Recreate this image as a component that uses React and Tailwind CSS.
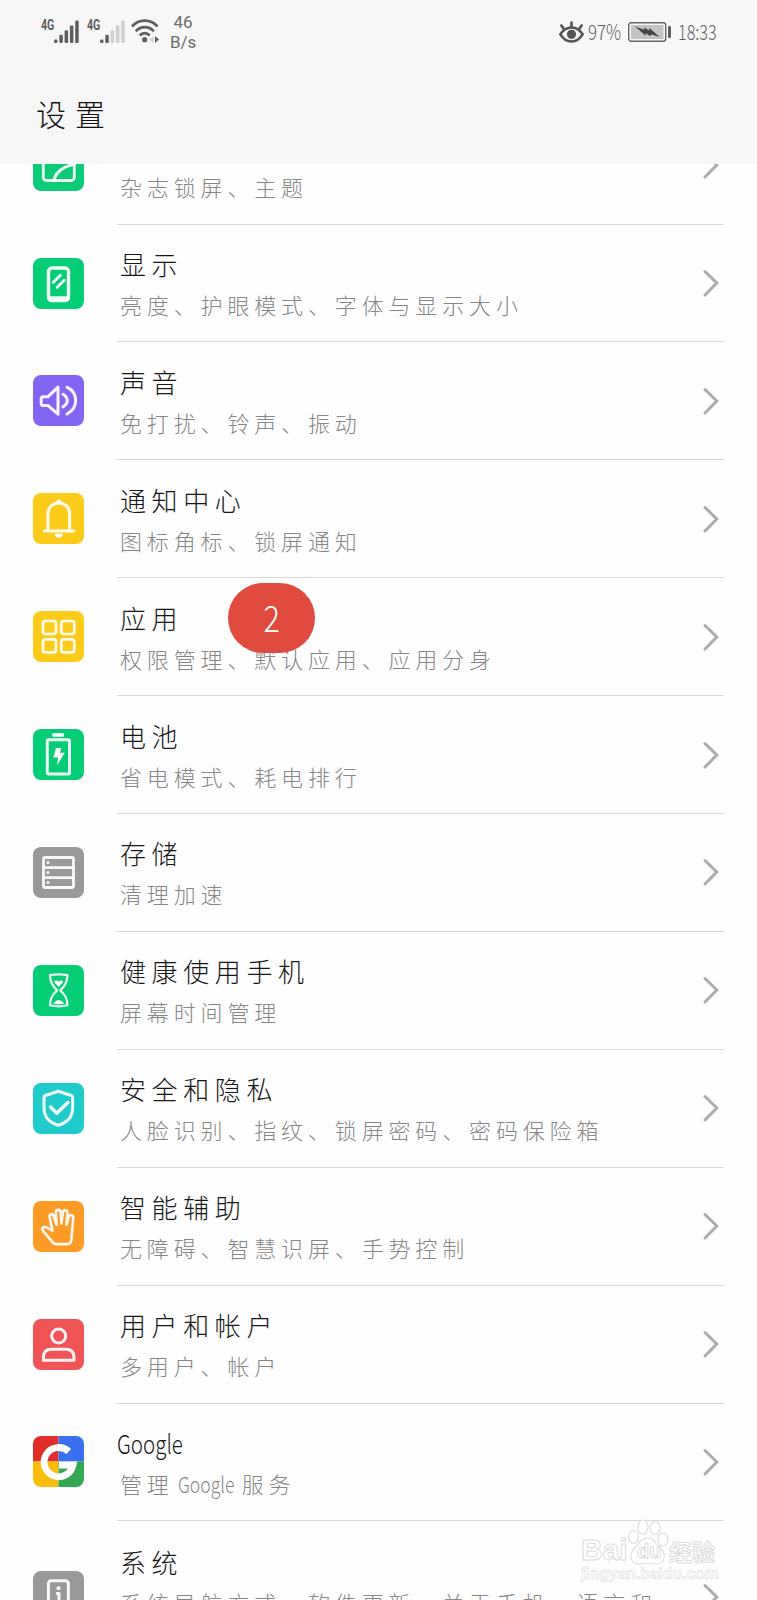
import React from 'react'

function Tile({ bg, children }) {
  return (
    <svg
      viewBox="0 0 51 51"
      className={`mb-px size-[51px] shrink-0 rounded-lg ${bg}`}
      fill="none"
      stroke="#fff"
      strokeOpacity="0.92"
      strokeWidth="3"
      strokeLinecap="round"
      strokeLinejoin="round"
    >
      {children}
    </svg>
  )
}

const icons = {
  wallpaper: (
    <Tile bg="bg-[#0bcb77]">
      <rect x="10.3" y="9" width="31" height="31.5" rx="3" strokeWidth="2.8" />
      <path d="M21 40c2-8 10-14 20-15.5" />
    </Tile>
  ),
  display: (
    <Tile bg="bg-[#05cd76]">
      <rect x="15.5" y="10" width="20" height="32.5" rx="3.5" strokeWidth="3.4" />
      <path d="M17 40.8h17" strokeWidth="5" />
      <path d="M20.3 24.3l7-7M24.2 29.3l7-7" strokeWidth="3" />
    </Tile>
  ),
  sound: (
    <Tile bg="bg-[#8465f3]">
      <path d="M8.2 23.8q0-2 2-2h4.6l10.2-9.6v27L14.8 30.4h-4.6q-2 0-2-2z" />
      <path d="M30 19.3c5.6 3.4 5.6 9.2 0 12.6M34 12.2c11.6 6 11.6 20.8 0 26.8" />
    </Tile>
  ),
  bell: (
    <Tile bg="bg-[#fdcc1b]">
      <path d="M11.3 37.9h29.4M15 37.5V20.3c0-6 4.8-10.4 10.8-10.4s10.8 4.4 10.8 10.4v17.2" />
      <circle cx="25.8" cy="8.8" r="2.2" fill="#fff" stroke="none" />
      <path d="M21.8 40.8h8a4 3.8 0 0 1-8 0z" fill="#fff" stroke="none" />
    </Tile>
  ),
  apps: (
    <Tile bg="bg-[#fdcc1b]">
      <rect x="10" y="10" width="13" height="13" rx="2.4" strokeWidth="2.7" />
      <rect x="28.3" y="10" width="13" height="13" rx="2.4" strokeWidth="2.7" />
      <rect x="10" y="28.3" width="13" height="13" rx="2.4" strokeWidth="2.7" />
      <rect x="28.3" y="28.3" width="13" height="13" rx="2.4" strokeWidth="2.7" />
    </Tile>
  ),
  battery: (
    <Tile bg="bg-[#05cd76]">
      <rect x="19.3" y="4.2" width="11.6" height="3.6" rx="1" fill="#fff" stroke="none" />
      <rect x="14.3" y="10.8" width="22.2" height="34.2" rx="1.5" />
      <path d="M23 19h5.2l-1.3 4.8h4.8L24 36.3l1.2-7.8h-4.9z" fill="#fff" stroke="none" />
    </Tile>
  ),
  storage: (
    <Tile bg="bg-[#999999]">
      <rect x="10.5" y="10.5" width="30" height="30" rx="1.5" strokeWidth="2.8" />
      <path d="M10.5 20.6h30M10.5 30.6h30" strokeWidth="2.8" />
      <circle cx="15" cy="15.4" r="1.5" fill="#fff" stroke="none" />
      <circle cx="15" cy="25.6" r="1.5" fill="#fff" stroke="none" />
      <circle cx="15" cy="35.6" r="1.5" fill="#fff" stroke="none" />
    </Tile>
  ),
  hourglass: (
    <Tile bg="bg-[#05cd76]">
      <path
        d="M17 10.2q8.7-1.8 17.4 0c0 6.5-1.7 10.3-7.2 15.1c5.5 4.8 7.2 8.5 7.2 15q-8.700 2-17.400 0c0-6.5 1.7-10.2 7.2-15c-5.5-4.8-7.2-8.6-7.2-15.1z"
        strokeWidth="2.2"
      />
      <path d="M25.7 22l-4-4.3q-1-2.2 1.3-2.2q1.8 0 2.7 1.2q.9-1.2 2.700-1.2q2.3 0 1.3 2.2z" fill="#fff" stroke="none" />
      <path d="M20 38.5q5.7-7.2 11.4 0q-5.7 1.4-11.4 0z" fill="#fff" stroke="none" />
    </Tile>
  ),
  shield: (
    <Tile bg="bg-[#20cccb]">
      <path d="M25.3 8.300l13 4.2q1.3.5 1.3 2V25c0 8.5-5.2 14.5-14.3 17.3C16.2 39.5 11 33.5 11 25V14.5q0-1.5 1.3-2z" />
      <path d="M17.5 24l6.2 6.2L35 19.5" strokeWidth="3.4" />
    </Tile>
  ),
  hand: (
    <Tile bg="bg-[#fe9a26]">
      <path
        d="M19.5 29.500L16.700 16.500c-.8-3.800 2.800-4.500 3.900-1.600l3 8.800L22.800 11.500c0-3.500 4.400-3.500 4.800-.4l.8 11.400 1.400-11c.5-3 4.700-2.700 4.600.5l-.8 11.600 2.100-7.600c.9-3 5-2 4.500 1l-1.800 21.500q-.4 4.600-4.200 4.600h-10.400q-2.200 0-4-1.700L10.600 30.600c-2.700-2.800-.3-5.900 3-4.200l5.900 3.200z"
        strokeWidth="2.700"
      />
    </Tile>
  ),
  user: (
    <Tile bg="bg-[#f05456]">
      <circle cx="25.7" cy="17" r="7" />
      <path d="M18.500 30.3h14.4q8.100 0 8.100 8v3H10.400v-3q0-8 8.100-8z" />
    </Tile>
  ),
  google: (
    <svg viewBox="0 0 51 51" className="mb-px size-[51px] shrink-0 rounded-lg" fill="none">
      <path d="M0 0h25.5v25.5H0z" fill="#e02f2b" />
      <path d="M25.5 0H51v25.5H25.5z" fill="#3a70f0" />
      <path d="M0 25.5h25.5V51H0z" fill="#fbbe0c" />
      <path d="M25.5 25.5H51V51H25.5z" fill="#34a753" />
      <path d="M35.7 15.5A14.600 14.600 0 1 0 40 29H26" stroke="#fff" strokeWidth="6.8" />
    </svg>
  ),
  system: (
    <Tile bg="bg-[#999999]">
      <rect x="15.4" y="9.8" width="20" height="32" rx="3" />
      <path d="M23 22.5h3v11M22.8 33.5h5.6" strokeLinecap="butt" />
      <circle cx="25.5" cy="17.3" r="2" fill="#fff" stroke="none" />
    </Tile>
  ),
}

const rows = [
  { icon: 'wallpaper', desc: '杂志锁屏、主题' },
  { icon: 'display', title: '显示', desc: '亮度、护眼模式、字体与显示大小' },
  { icon: 'sound', title: '声音', desc: '免打扰、铃声、振动' },
  { icon: 'bell', title: '通知中心', desc: '图标角标、锁屏通知' },
  { icon: 'apps', title: '应用', desc: '权限管理、默认应用、应用分身', badge: '2' },
  { icon: 'battery', title: '电池', desc: '省电模式、耗电排行' },
  { icon: 'storage', title: '存储', desc: '清理加速' },
  { icon: 'hourglass', title: '健康使用手机', desc: '屏幕时间管理' },
  { icon: 'shield', title: '安全和隐私', desc: '人脸识别、指纹、锁屏密码、密码保险箱' },
  { icon: 'hand', title: '智能辅助', desc: '无障碍、智慧识屏、手势控制' },
  { icon: 'user', title: '用户和帐户', desc: '多用户、帐户' },
  {
    icon: 'google',
    title: <Latin box="-ml-[3px] w-[64px]" scale="scale-x-[0.79]">Google</Latin>,
    desc: (
      <>
        管理<Latin box="ml-[4px] w-[64px]" scale="scale-x-[0.8]">Google</Latin>服务
      </>
    ),
  },
]

// Narrow latin text: the glyphs are squeezed inside a box of fixed width
function Latin({ box, scale, children }) {
  return (
    <span className={`inline-block whitespace-nowrap tracking-normal ${box}`}>
      <span className={`inline-block origin-left ${scale}`}>{children}</span>
    </span>
  )
}

function Chevron() {
  return (
    <svg
      viewBox="0 0 18 30"
      className="mr-[4px] h-[30px] w-[18px] shrink-0"
      fill="none"
      stroke="#acacac"
      strokeWidth="3"
      strokeLinecap="round"
    >
      <path d="M3 3.5L14.8 15L3 27" />
    </svg>
  )
}

function Row({ icon, title, desc, badge }) {
  return (
    <li className="flex h-[117.9px] items-center pl-[33px]">
      {icons[icon]}
      <div className="relative ml-[33px] mr-[33px] flex h-full flex-1 items-center border-b border-[#d9d9d9]">
        <div className="flex-1 pl-[3px] pt-[2px]">
          <div className="h-10 text-[26px] leading-10 tracking-[5.6px] text-[#161616]">{title}</div>
          <div className="h-10 whitespace-nowrap text-[22px] leading-10 tracking-[4.85px] text-[#868686]">{desc}</div>
        </div>
        <Chevron />
        {badge && (
          <span className="absolute left-[111px] top-[5px] flex h-[70px] w-[87px] items-center justify-center rounded-[35px] bg-[#e04a3f] pb-[4px] text-[36px] text-white">
            <span className="scale-x-[0.85]">{badge}</span>
          </span>
        )}
      </div>
    </li>
  )
}

function Signal({ on }) {
  const bars = [
    [0, 19.5, 3.5],
    [5.3, 14.8, 8.2],
    [10.6, 10.2, 12.8],
    [15.9, 5.5, 17.5],
    [21.2, 0.5, 22.5],
  ]
  return (
    <svg viewBox="0 0 25 24" className="mt-[20px] h-6 w-[25px]">
      {bars.map(([x, y, h], i) => (
        <rect key={x} x={x} y={y} width="3.5" height={h} rx="1.2" fill={i < on ? '#5e5e5e' : '#cfcfcf'} />
      ))}
    </svg>
  )
}

function StatusBar() {
  return (
    <div className="flex h-16 items-start pl-[41px] pr-[39px] text-[#5e5e5e]">
      <span className="mt-[18px] w-[13px] font-['Roboto'] text-[14px] font-bold leading-[14px]">
        <span className="inline-block origin-left scale-x-[0.76]">4G</span>
      </span>
      <Signal on={5} />
      <span className="ml-[8px] mt-[18px] w-[13px] font-['Roboto'] text-[14px] font-bold leading-[14px]">
        <span className="inline-block origin-left scale-x-[0.76]">4G</span>
      </span>
      <Signal on={2} />
      <svg viewBox="0 0 28 24" className="ml-[6px] mt-[19px] h-6 w-7" fill="none" stroke="#5e5e5e" strokeWidth="2.8">
        <path d="M1 7.5C8-.3 19.5-.3 26.5 7.5M4.8 12.200c5-5.400 13-5.400 18 0M8.7 16.5c3-3 7-3 10 0" />
        <circle cx="13.7" cy="20.7" r="2.6" fill="#5e5e5e" stroke="none" />
        <path d="M22.5 17v7l-4.200-3.500z" fill="#cfcfcf" stroke="none" />
        <path d="M24 17v7l4-3.500z" fill="#5e5e5e" stroke="none" />
      </svg>
      <div className="ml-[11px] mt-[12px] w-[26px] text-center font-['Roboto'] text-[17px] font-normal leading-5 text-[#6c6c6c]">
        <div>46</div>
        <div>B/s</div>
      </div>

      <svg viewBox="0 0 25 23" className="ml-auto mt-[21px] h-[23px] w-[25px]" fill="none" stroke="#555" strokeWidth="2.6" strokeLinecap="round">
        <path d="M1.4 13.3C7 4.300 18 4.300 23.600 13.3C18 22.800 7 22.800 1.400 13.3z" />
        <path d="M12.5 1.5v4M2.3 4.5l2 2.6M22.700 4.5l-2 2.6" />
        <circle cx="12.5" cy="13.3" r="4.6" fill="#555" stroke="none" />
      </svg>
      <span className="ml-[4px] mt-[19px] w-[34px] text-[21px] leading-6">
        <span className="inline-block origin-left scale-x-[0.8]">97%</span>
      </span>
      <svg viewBox="0 0 44 20" className="ml-[6px] mt-[22px] h-5 w-11" fill="none">
        <rect x="0.7" y="0.7" width="37" height="18.6" rx="2.5" stroke="#666" strokeWidth="1.4" />
        <rect x="3" y="3" width="32.5" height="14" fill="#c3c3c3" />
        <rect x="40" y="4" width="3" height="12" rx="1.2" fill="#5e5e5e" />
        <path d="M7 4.5l9 3.3.5-2.3 4.5 3 .5-2.5L31.5 15l-8.500-2.800-.5 2-4.500-3-.5 2.300z" fill="#444" />
      </svg>
      <span className="ml-[6px] mt-[19px] w-[40px] text-[21px] leading-6">
        <span className="inline-block origin-left scale-x-[0.77]">18:33</span>
      </span>
    </div>
  )
}

function Watermark() {
  return (
    <div className="absolute left-[581px] top-[1517px] w-[140px] text-white [-webkit-text-stroke:1px_#dcdcdc]">
      <div className="flex h-[48px] items-end">
        <span className="w-[47px] font-['Liberation_Sans'] text-[30px] font-bold leading-[30px]">Bai</span>
        <span className="relative h-[46px] w-[41px]">
          <svg viewBox="0 0 41 46" className="h-[46px] w-[41px]" fill="#fff" stroke="#dcdcdc" strokeWidth="1.1">
            <ellipse cx="5.5" cy="18" rx="5" ry="6.5" />
            <ellipse cx="15" cy="8" rx="5" ry="7" />
            <ellipse cx="27" cy="9" rx="5" ry="6.5" />
            <ellipse cx="35" cy="20.5" rx="5" ry="6.5" />
            <path d="M20 19c7 0 8 7 13 11s4.500 15-4 15c-4 0-5-1-9-1s-5 1-9 1c-9 0-10-10-5-15s7-11 14-11z" />
          </svg>
          <span className="absolute left-[9px] top-[21px] font-['Liberation_Sans'] text-[20px] font-bold leading-[22px]">du</span>
        </span>
        <span className="text-[23px] font-bold leading-[28px]">经验</span>
      </div>
      <div className="font-['Liberation_Sans'] text-[16px] font-bold leading-[18px] [-webkit-text-stroke:0.6px_#dcdcdc]">
        <span className="inline-block origin-left scale-x-[0.98]">jingyan.baidu.com</span>
      </div>
    </div>
  )
}

export default function App() {
  return (
    <div className="relative flex h-[1600px] w-[757px] flex-col overflow-hidden bg-[#fefefe] font-['Noto_Sans_CJK_SC',sans-serif] font-light">
      <header className="h-[164px] shrink-0 bg-[#f7f7f7]">
        <StatusBar />
        <h1 className="mt-[29px] pl-[36px] text-[30px] leading-10 tracking-[9px] text-[#111]">设置</h1>
      </header>

      <main className="min-h-0 flex-1 overflow-hidden">
        <ul className="-mt-[57.3px]">
          {rows.map((row) => (
            <Row key={row.icon} {...row} />
          ))}
          {/* Taller last entry, its description wraps to a second line */}
          <li className="flex h-[152px] items-center pl-[33px]">
            {icons.system}
            <div className="ml-[33px] mr-[33px] flex h-full flex-1 items-center">
              <div className="flex-1 self-start pl-[3px] pt-[21px]">
                <div className="h-10 text-[26px] leading-10 tracking-[5.6px] text-[#161616]">系统</div>
                <div className="w-[540px] text-[22px] leading-10 tracking-[4.85px] text-[#868686]">
                  系统导航方式、软件更新、关于手机、语言和输入法
                </div>
              </div>
              <Chevron />
            </div>
          </li>
        </ul>
      </main>

      <Watermark />
    </div>
  )
}
